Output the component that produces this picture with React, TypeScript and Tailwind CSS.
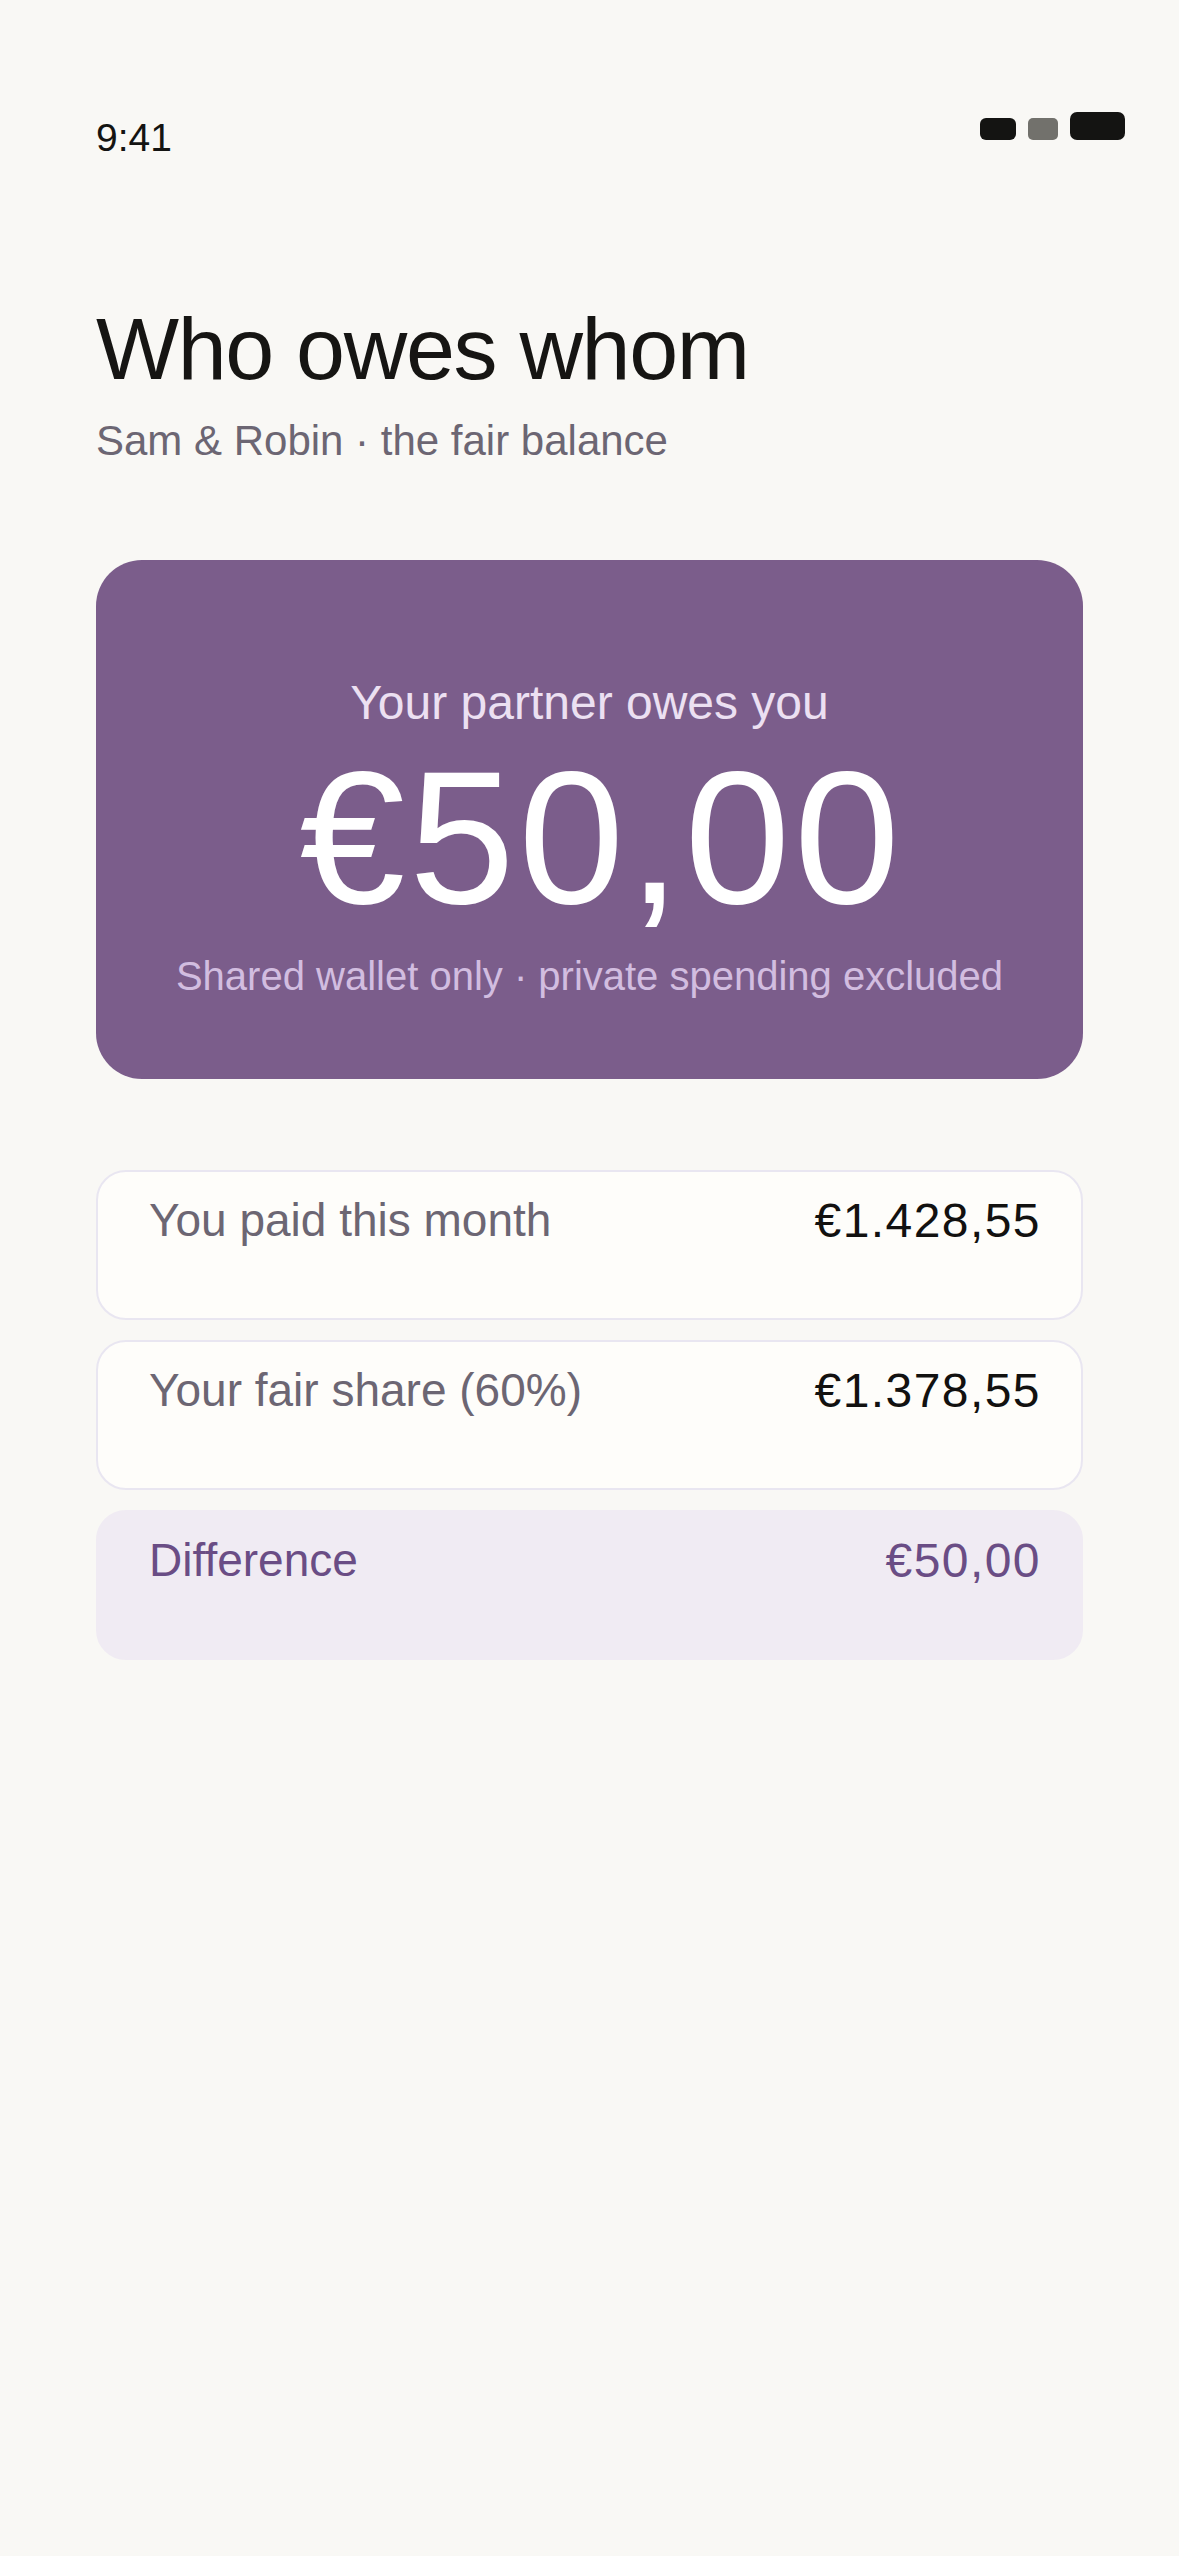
import React from 'react';

type Row = {
  label: string;
  amount: string;
  highlight?: boolean;
};

const rows: Row[] = [
  { label: 'You paid this month', amount: '€1.428,55' },
  { label: 'Your fair share (60%)', amount: '€1.378,55' },
  { label: 'Difference', amount: '€50,00', highlight: true },
];

const StatusBar: React.FC = () => (
  <div className="flex items-start justify-between pl-[96px] pr-[54px]">
    <span className="pt-[118px] text-[39px] leading-none text-[#141412]">9:41</span>
    <div className="mt-[112px] flex h-[28px] items-end gap-[12px]">
      <div className="h-[22px] w-[36px] rounded-[6px] bg-[#141412]" />
      <div className="h-[22px] w-[30px] rounded-[5px] bg-[#72716c]" />
      <div className="h-[28px] w-[55px] rounded-[7px] bg-[#141412]" />
    </div>
  </div>
);

const BalanceRow: React.FC<{ row: Row }> = ({ row }) => (
  <div
    className={`flex h-[150px] items-start justify-between rounded-[30px] border-2 pl-[51px] pr-[40px] pt-[25px] ${
      row.highlight ? 'border-[#f0ebf3] bg-[#f0ebf3]' : 'border-[#e9e6f1] bg-[#fefdfa]'
    }`}
  >
    <span
      className={`text-[46px] leading-none ${row.highlight ? 'text-[#6a4d85]' : 'text-[#6c6673]'}`}
    >
      {row.label}
    </span>
    <span
      className={`text-[48px] leading-none tracking-[0.03em] ${
        row.highlight ? 'text-[#6a4d85]' : 'text-[#121110]'
      }`}
    >
      {row.amount}
    </span>
  </div>
);

export default function App() {
  return (
    <div className="min-h-[2556px] w-full bg-[#f9f8f5] font-['Liberation_Sans',Arial,sans-serif]">
      <StatusBar />

      <div className="px-[96px] pb-[120px]">
        {/* Header */}
        <h1 className="mt-[148px] text-[88px] font-normal leading-none tracking-[-0.015em] text-[#161513]">
          Who owes whom
        </h1>
        <p className="mt-[27px] text-[42px] leading-none text-[#6c6673]">
          Sam &amp; Robin · the fair balance
        </p>

        {/* Balance card */}
        <div className="mt-[98px] flex flex-col items-center rounded-[46px] bg-[#7b5d8b] pb-[83px] pt-[119px] text-center">
          <span className="text-[48px] leading-none text-[#ece0f2]">Your partner owes you</span>
          <span className="mt-[15px] pl-[24px] text-[190px] leading-none tracking-[0.02em] text-white">
            €50,00
          </span>
          <span className="mt-[24px] text-[40px] leading-none text-[#d2bde0]">
            Shared wallet only · private spending excluded
          </span>
        </div>

        {/* Breakdown */}
        <div className="mt-[91px] flex flex-col gap-[20px]">
          {rows.map((row) => (
            <BalanceRow key={row.label} row={row} />
          ))}
        </div>
      </div>
    </div>
  );
}
